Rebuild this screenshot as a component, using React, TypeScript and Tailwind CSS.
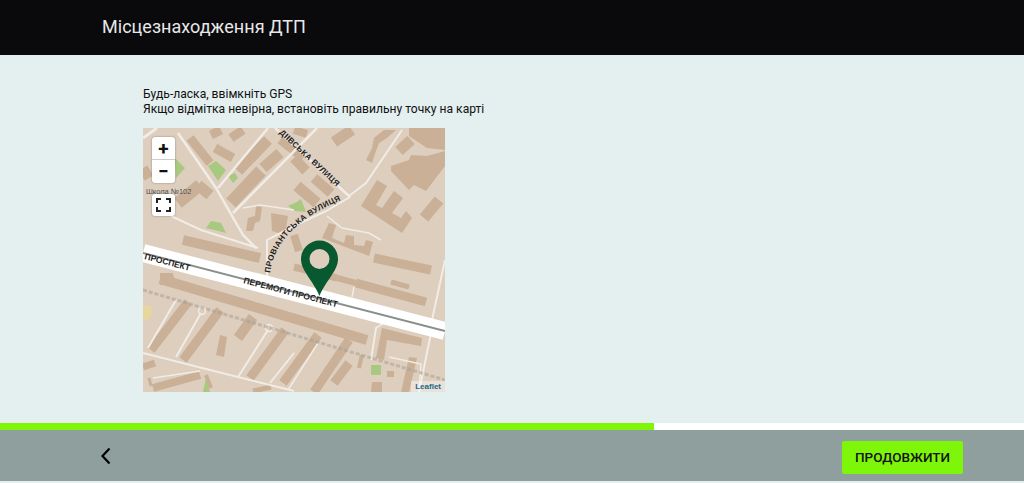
import React from "react";

const BUILDING = "#c9b097";
const ROAD = "#f1ece5";

// x1, y1, x2, y2, width
const buildings: number[][] = [
  [47, 10, 67, 35, 9], [72, 20, 90, 30, 9], [95, 43, 125, 12, 11], [120, 40, 137, 25, 11],
  [88, 75, 118, 43, 13], [68, 7, 78, 2, 9], [88, 10, 100, 2, 9], [35, 75, 57, 57, 12],
  [55, 57, 67, 67, 11], [0, 40, 6, 50, 10], [40, 112, 117, 130, 10], [137, 12, 160, 30, 8],
  [191, 14, 209, 2, 11], [256, 23, 268, 12, 11], [151, 30, 163, 43, 10], [171, 50, 188, 65, 10],
  [154, 58, 174, 75, 11], [151, 2, 164, 6, 8], [281, 90, 296, 72, 11], [151, 107, 156, 123, 8],
  [231, 130, 288, 142, 9], [213, 155, 283, 174, 9], [194, 150, 213, 155, 6], [151, 139, 194, 150, 7],
  [248, 154, 266, 159, 5], [17, 151, 224, 212, 10], [8, 222, 45, 174, 9], [40, 232, 77, 182, 9],
  [95, 210, 110, 189, 10], [107, 250, 142, 202, 9], [140, 255, 175, 207, 9], [171, 264, 206, 212, 9],
  [191, 255, 206, 235, 9], [216, 240, 219, 227, 4], [10, 260, 57, 247, 8], [0, 239, 12, 235, 7],
  [63, 247, 68, 260, 4], [6, 250, 8, 258, 3], [110, 263, 128, 259, 5],
];

const polygons: string[] = [
  "129,103 128,85 145,88 142,107",
  "103,103 105,90 112,88 113,78 119,79 117,93 112,95 110,103",
  "223,32 229,20 231,10 241,2 253,2 244,10 236,15 233,23 229,35",
  "266,0 302,0 302,22 284,20 266,8",
  "248,38 266,32 268,27 284,28 302,23 302,38 283,63 271,57 266,62 248,43",
  "218,78 234,52 244,58 233,77 239,80 251,63 260,70 249,85 258,90 263,83 269,90 259,105",
  "179,110 186,95 193,97 189,110 201,115 203,107 211,108 211,117 221,118 223,112 230,114 226,128",
  "17,145 30,145 32,155 17,157",
  "77,207 84,209 81,229 73,227",
  "233,230 239,200 279,210 278,218 244,212 241,232",
  "258,264 266,229 274,230 266,264",
  "228,264 229,254 239,254 239,264",
  "244,243 251,243 251,249 244,249",
];

const greens: string[] = [
  "65,38 73,33 83,42 75,53",
  "85,48 92,45 95,50 90,55",
  "32,30 42,40 33,50",
  "63,100 68,93 78,95 83,105",
  "145,78 154,74 158,71 163,84 152,83",
  "228,237 238,237 238,247 228,247",
  "60,264 63,250 67,264",
];

// points, width
const roads: [string, number][] = [
  ["35,5 73,60 100,107 113,120", 2.5],
  ["75,60 125,0", 2.5],
  ["90,85 174,0", 2.5],
  ["132,0 207,69", 2.5],
  ["206,68 223,55 259,2", 2],
  ["28,88 58,102 115,120", 2],
  ["207,69 183,83 151,98 124,112 124,150", 2],
  ["100,80 117,77 151,82", 1.5],
  ["184,88 199,100 226,105 238,112", 1.5],
  ["0,10 14,0", 3],
  ["33,172 5,220", 2],
  ["58,185 33,229", 2],
  ["125,202 95,249", 2],
  ["0,225 67,242 151,263", 2],
  ["151,225 127,255", 2],
  ["175,215 145,262", 1.5],
  ["10,250 57,243", 1.5],
  ["228,232 233,200 241,195", 2],
  ["276,264 288,205", 2],
  ["289,192 302,132", 2],
  ["211,159 209,169", 1.5],
  ["246,229 278,236 276,264", 1.5],
];

const MapSketch = () => (
  <svg viewBox="0 0 302 264" className="block w-[302px] h-[264px]">
    <defs>
      <path id="provPath" d="M127,145 C131,117 150,90 206,69" fill="none" />
    </defs>
    <rect width="302" height="264" fill="#ddcebe" />
    {polygons.map((p) => (
      <polygon key={p} points={p} fill={BUILDING} />
    ))}
    {buildings.map((b, i) => (
      <line key={i} x1={b[0]} y1={b[1]} x2={b[2]} y2={b[3]} stroke={BUILDING} strokeWidth={b[4]} />
    ))}
    {greens.map((p) => (
      <polygon key={p} points={p} fill="#a9c880" />
    ))}
    <polygon points="0,178 8,178 9,186 4,192 0,192" fill="#e8d79c" />
    {roads.map(([points, width]) => (
      <polyline key={points} points={points} fill="none" stroke={ROAD} strokeWidth={width} />
    ))}
    {/* turning circles */}
    <circle cx="59" cy="183" r="3.5" fill="none" stroke={ROAD} strokeWidth="1.5" />
    <circle cx="126" cy="200" r="3.5" fill="none" stroke={ROAD} strokeWidth="1.5" />
    {/* rail line below the avenue */}
    <line x1="0" y1="162" x2="302" y2="252" stroke="#a9a296" strokeWidth="3" strokeDasharray="4 2" opacity="0.55" />
    {/* avenue */}
    <line x1="0" y1="125" x2="302" y2="203" stroke="#ffffff" strokeWidth="18" />
    <line x1="0" y1="125" x2="302" y2="203" stroke="#8a8f8c" strokeWidth="2" />
    <g fontFamily="'Liberation Sans', Arial, sans-serif" fontWeight="700" fill="#222222" fontSize="8.5">
      <text transform="translate(1,131) rotate(14.5)">ПРОСПЕКТ</text>
      <text transform="translate(100,155) rotate(14.5)">ПЕРЕМОГИ ПРОСПЕКТ</text>
      <text transform="translate(136,5) rotate(43)" fontSize="8" letterSpacing="0.4">
        ДІІВСЬКА ВУЛИЦЯ
      </text>
      <text fontSize="8" letterSpacing="0.4">
        <textPath href="#provPath">ПРОВІАНТСЬКА ВУЛИЦЯ</textPath>
      </text>
    </g>
    <text x="3" y="66" fontFamily="'Liberation Sans', Arial, sans-serif" fontSize="7.5" fill="#4f4f4f">
      Школа №102
    </text>
    <path
      fillRule="evenodd"
      fill="#08592f"
      d="M176.5,168 C170,152 158,143 158,131 A18.5,18.5 0 0 1 195,131 C195,143 183,152 176.5,168 Z M176.5,121 A10,10 0 1 0 176.5,141 A10,10 0 1 0 176.5,121 Z"
    />
  </svg>
);

const App: React.FC = () => {
  return (
    <div className="h-[483px] w-[1024px] flex flex-col overflow-hidden bg-[#e4eff0] font-['Roboto',sans-serif]">
      <header className="h-[55px] shrink-0 bg-[#0a0a0d] flex items-center pl-[102px] pb-[3px]">
        <h1 className="text-[18px] tracking-[0.03px] text-[#e8e8e8]">Місцезнаходження ДТП</h1>
      </header>

      <main className="flex-1 pl-[143px] pt-[32px]">
        <p className="text-[12.1px] leading-[15px] text-[#111111]">Будь-ласка, ввімкніть GPS</p>
        <p className="text-[12.1px] leading-[15px] text-[#111111]">
          Якщо відмітка невірна, встановіть правильну точку на карті
        </p>
        <div className="relative mt-[11px] w-[302px] h-[264px] overflow-hidden">
          <MapSketch />
          <div className="absolute left-[9px] top-[9px] w-[23px] rounded-[3px] bg-white shadow-[0_0_2px_rgba(0,0,0,0.4)]">
            <div className="h-[23px] flex items-center justify-center border-b border-[#cccccc] text-[19px] font-bold leading-none text-[#111111]">
              +
            </div>
            <div className="h-[23px] flex items-center justify-center text-[19px] font-bold leading-none text-[#111111]">
              −
            </div>
          </div>
          <div className="absolute left-[9px] top-[66px] w-[23px] h-[22px] rounded-[3px] bg-white shadow-[0_0_2px_rgba(0,0,0,0.4)] flex items-center justify-center">
            <svg width="15" height="14" viewBox="0 0 15 14" fill="none" stroke="#222222" strokeWidth="2">
              <path d="M1,5 V1 H5 M10,1 H14 V5 M14,9 V13 H10 M5,13 H1 V9" />
            </svg>
          </div>
          <div className="absolute right-0 bottom-0 px-[4px] bg-white/40 text-[8px] leading-[11px] font-bold font-['Liberation_Sans',sans-serif] text-[#1a6a8a]">
            Leaflet
          </div>
        </div>
      </main>

      <div className="h-[7px] shrink-0 bg-white">
        <div className="h-full w-[654px] bg-[#7ff50a]" />
      </div>

      <footer className="h-[51px] shrink-0 bg-[#8f9f9e] flex items-center justify-between pl-[100px] pr-[61px]">
        <svg width="12" height="18" viewBox="0 0 12 18" fill="none" stroke="#000000" strokeWidth="2.2">
          <path d="M9.5,1.5 L2.5,9 L9.5,16.5" />
        </svg>
        <button className="w-[121px] h-[33px] mt-[3px] bg-[#7ef60a] rounded-[2px] text-[13.5px] font-medium text-[#111111]">
          ПРОДОВЖИТИ
        </button>
      </footer>
      <div className="h-[2px] shrink-0 bg-[#e4eff0]" />
    </div>
  );
};

export default App;
